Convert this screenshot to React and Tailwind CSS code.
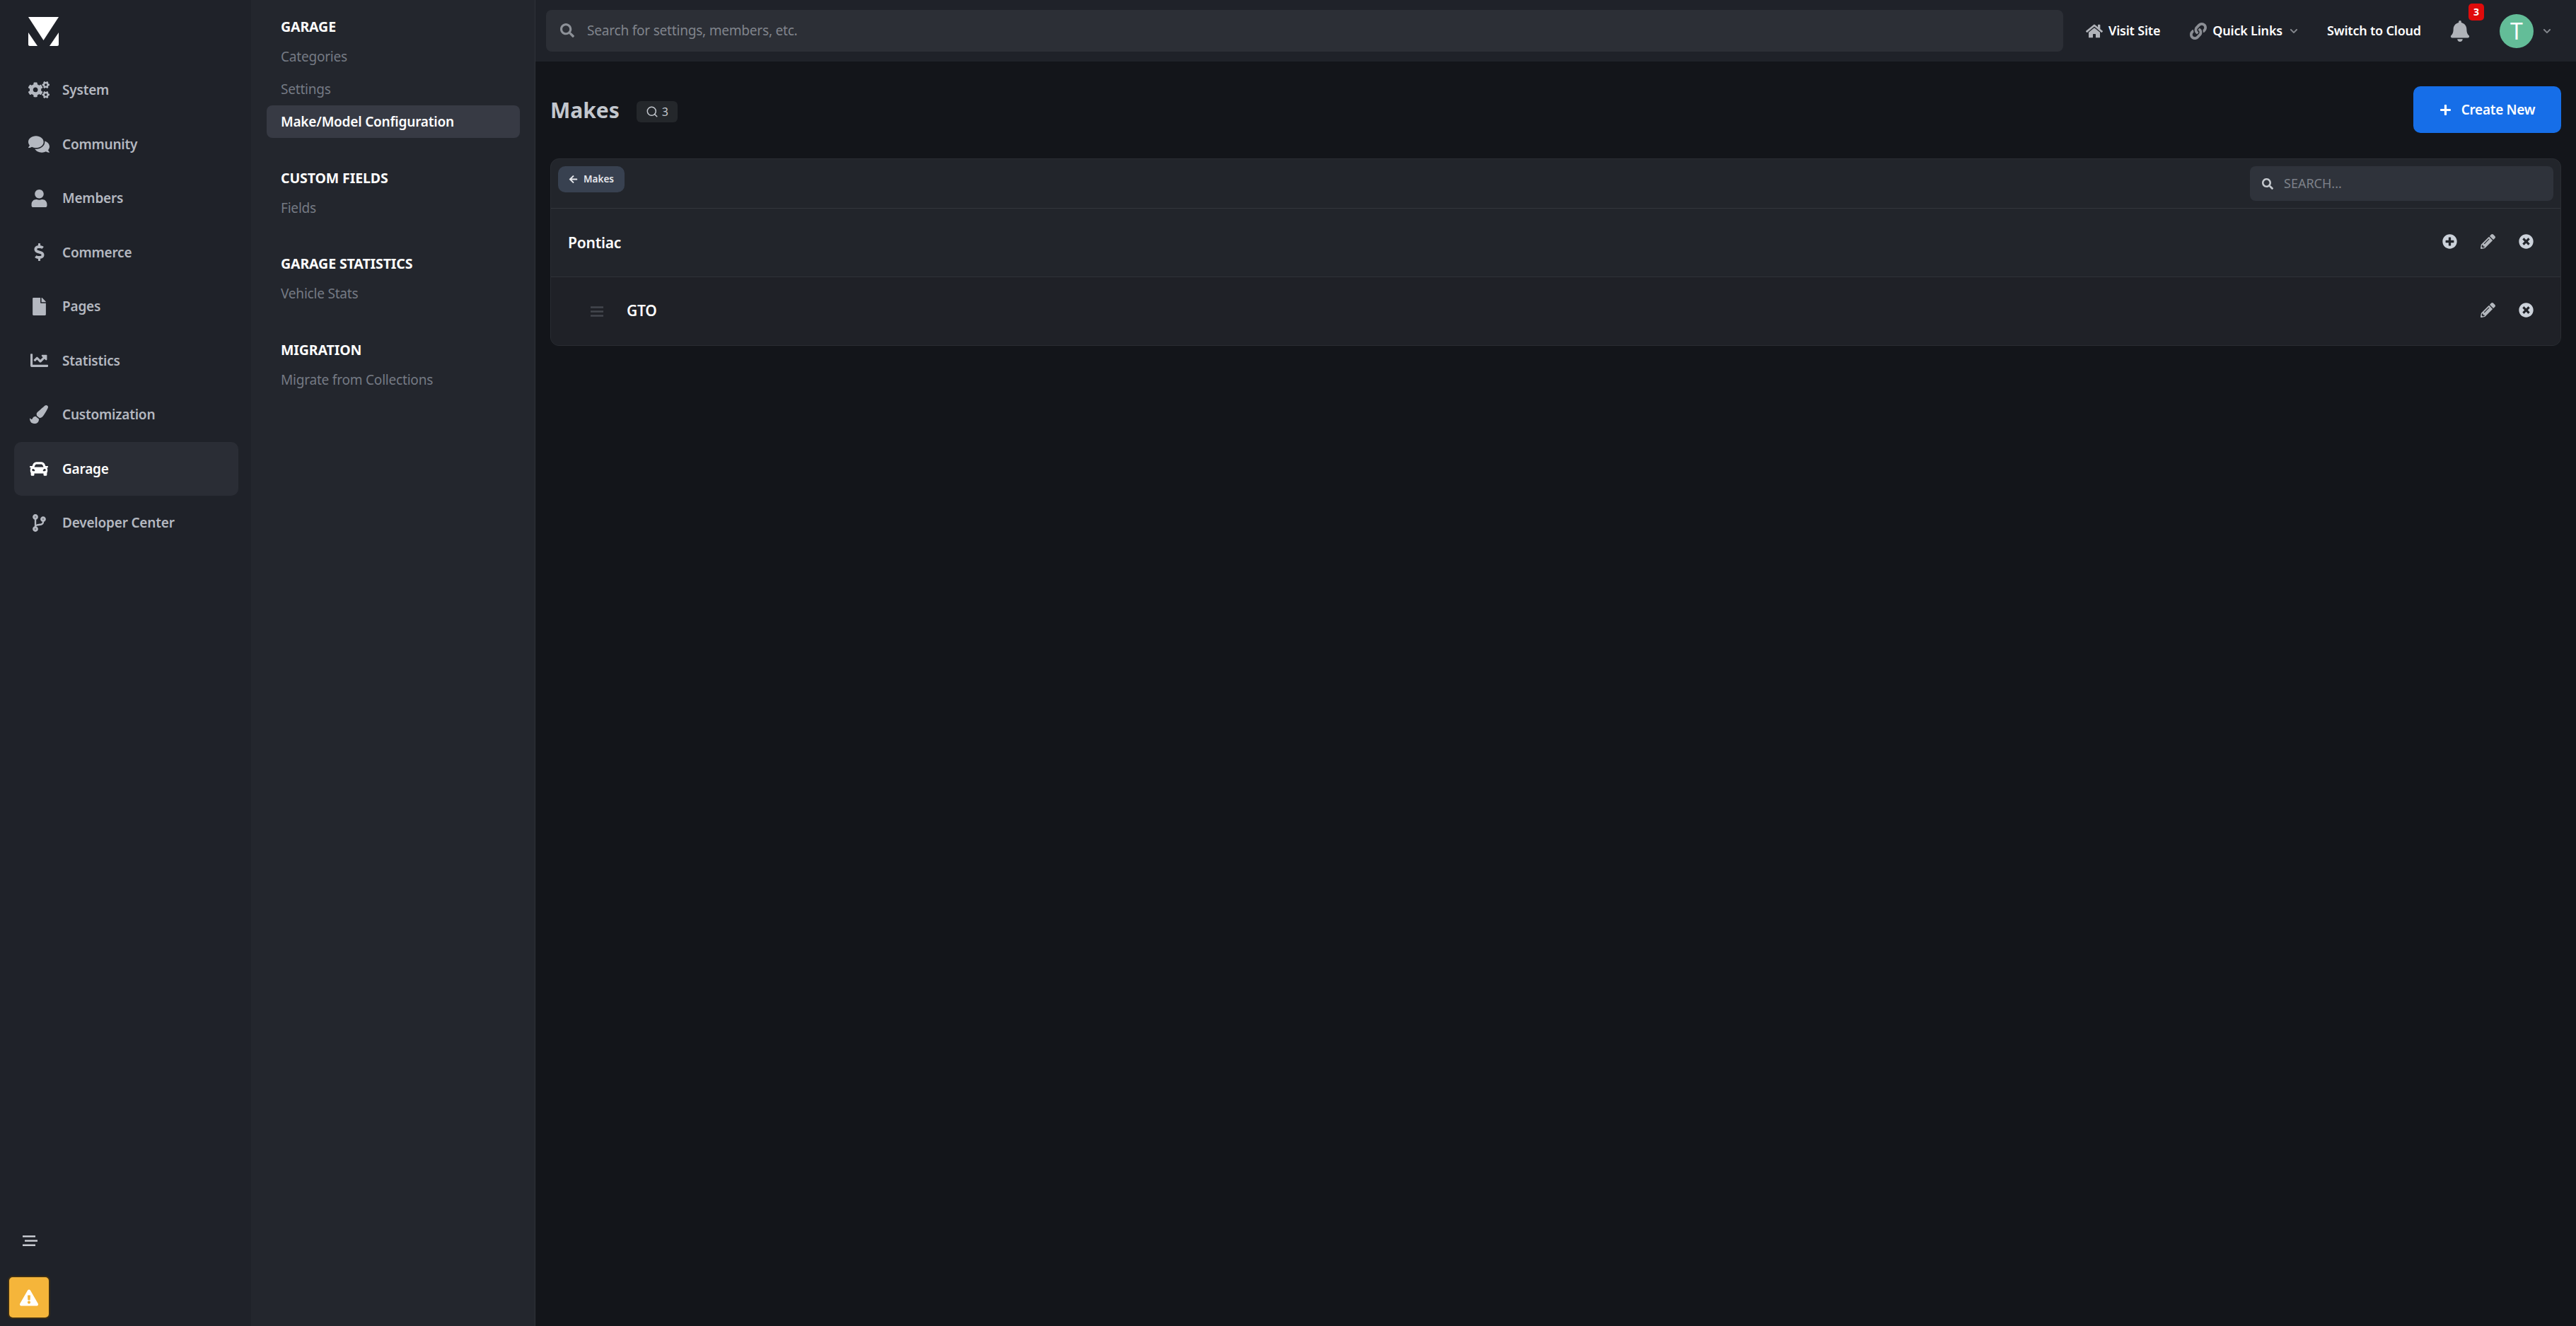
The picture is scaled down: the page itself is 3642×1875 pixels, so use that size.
import {
  FaCogs, FaComments, FaUser, FaDollarSign, FaFile, FaChartLine, FaPaintBrush, FaCar, FaCodeBranch,
  FaHome, FaLink, FaBell, FaPlus, FaSearch, FaPencilAlt, FaTimesCircle, FaPlusCircle, FaExclamationTriangle, FaArrowLeft, FaChevronDown,
} from 'react-icons/fa';
import { Search } from 'lucide-react';

const railItems = [
  { label: 'System', icon: FaCogs, size: 'text-[30px]' },
  { label: 'Community', icon: FaComments, size: 'text-[30px]' },
  { label: 'Members', icon: FaUser, size: 'text-[25px]' },
  { label: 'Commerce', icon: FaDollarSign, size: 'text-[25px]' },
  { label: 'Pages', icon: FaFile, size: 'text-[25px]' },
  { label: 'Statistics', icon: FaChartLine, size: 'text-[25px]' },
  { label: 'Customization', icon: FaPaintBrush, size: 'text-[26px]' },
  { label: 'Garage', icon: FaCar, active: true, size: 'text-[26px]' },
  { label: 'Developer Center', icon: FaCodeBranch, size: 'text-[25px]' },
];

const subSections = [
  { title: 'Garage', links: ['Categories', 'Settings', 'Make/Model Configuration'] },
  { title: 'Custom Fields', links: ['Fields'] },
  { title: 'Garage Statistics', links: ['Vehicle Stats'] },
  { title: 'Migration', links: ['Migrate from Collections'] },
];

const Logo = () => (
  <svg viewBox="0 0 43 41" className="w-[43px] h-[41px]">
    <path d="M0 0H43L21.5 33Z" fill="#fff" />
    <path d="M0 22L13 41H2Q0 41 0 39Z" fill="#fff" />
    <path d="M43 22L30 41H41Q43 41 43 39Z" fill="#fff" />
  </svg>
);

const Rail = () => (
  <aside className="w-[355px] shrink-0 bg-[#1f2229] flex flex-col">
    <div className="pl-[40px] pt-[24px] h-[89px]">
      <Logo />
    </div>
    <nav className="pl-[20px] pr-[18px]">
      {railItems.map(({ label, icon: Icon, active, size }) => (
        <a
          key={label}
          className={`flex items-center h-[76.5px] rounded-[10px] ${active ? 'bg-[#2a2d35] text-white' : 'text-[#b4b8c0]'}`}
        >
          <span className="w-[68px] flex justify-center pl-[2px]">
            <Icon className={size} />
          </span>
          <span className="text-[19px] tracking-[-0.2px] font-semibold">{label}</span>
        </a>
      ))}
    </nav>
    <div className="mt-auto pl-[11px] pb-[10px]">
      <svg viewBox="0 0 21 15" className="w-[21px] h-[15px] ml-[21px] mb-[42px]">
        <path d="M0 1.2H18M3 7.5H21M0 13.8H18" stroke="#c7cad0" strokeWidth="2.4" fill="none" />
      </svg>
      <button className="w-[60px] h-[61px] rounded-[7px] bg-[#f5b53a] border-2 border-[#3d2e14] flex items-center justify-center">
        <FaExclamationTriangle className="text-white text-[26px]" />
      </button>
    </div>
  </aside>
);

const SubNav = () => (
  <aside className="w-[402px] shrink-0 bg-[#23262d] border-r border-[#2f3238] pl-[22px] pr-[21px] pt-[26px]">
    {subSections.map((section) => (
      <section key={section.title} className="mb-[44.5px]">
        <h3 className="pl-[20px] text-[19.5px] tracking-[-0.1px] leading-[24px] font-bold uppercase text-white mb-[7px]">{section.title}</h3>
        {section.links.map((link) => {
          const active = link === 'Make/Model Configuration';
          return (
            <a
              key={link}
              className={`block pl-[20px] h-[46px] leading-[46px] text-[19px] tracking-[-0.2px] rounded-[8px] ${active ? 'bg-[#373a44] text-white font-semibold' : 'text-[#757a84]'}`}
            >
              {link}
            </a>
          );
        })}
      </section>
    ))}
  </aside>
);

const TopBar = () => (
  <header className="h-[87px] bg-[#1f2229] shrink-0 flex items-center pl-[15px] whitespace-nowrap">
    <div className="w-[2145px] shrink-0 h-[59px] -mt-[1px] rounded-[8px] bg-[#2c2f36] flex items-center pl-[20px] text-[#80848c] text-[19px] tracking-[-0.2px]">
      <FaSearch className="text-[#8d9198] text-[20px] mr-[18px]" />
      <span>Search for settings, members, etc.</span>
    </div>
    <a className="ml-[32px] flex items-center gap-[8px] text-[18px] tracking-[-0.2px] font-semibold text-white">
      <FaHome className="text-[#b0b3b9] text-[24px]" /> Visit Site
    </a>
    <a className="ml-[42px] flex items-center gap-[8px] text-[18px] tracking-[-0.2px] font-semibold text-white">
      <FaLink className="text-[#8b8e94] text-[24px]" /> Quick Links
      <FaChevronDown className="text-[#84878d] text-[12px] ml-[2px]" />
    </a>
    <a className="ml-[41px] text-[18px] tracking-[-0.2px] font-semibold text-white">Switch to Cloud</a>
    <div className="relative ml-[40px]">
      <FaBell className="text-[#b0b3b9] text-[30px]" />
      <span className="absolute -top-[24px] -right-[19px] w-[22px] h-[24px] rounded-[5px] bg-[#e00b0b] text-white text-[14px] font-bold flex items-center justify-center">3</span>
    </div>
    <div className="ml-[41px] w-[48px] h-[48px] rounded-full bg-[#63bd98] text-white text-[32px] flex items-center justify-center">T</div>
    <FaChevronDown className="text-[#84878d] text-[12px] ml-[13px]" />
  </header>
);

const ActionIcons = ({ add }) => (
  <div className="flex items-center gap-[33px] text-[#ccd2da] -mt-[3px]">
    {add && <FaPlusCircle className="text-[21px]" />}
    <FaPencilAlt className="text-[21px] text-[#b4b8be]" />
    <FaTimesCircle className="text-[21px]" />
  </div>
);

const Card = () => (
  <div className="rounded-[12px] bg-[#22252b] border border-[#2a2d33] overflow-hidden">
    <div className="h-[70px] flex items-start justify-between px-[10px] pt-[10px] border-b border-[#33363c]">
      <button className="h-[37px] w-[94px] rounded-[10px] bg-[#384150] text-[#e6e8ec] text-[13.5px] font-semibold flex items-center justify-center gap-[8px]">
        <FaArrowLeft className="text-[13px]" /> Makes
      </button>
      <div className="w-[429px] h-[49px] rounded-[8px] bg-[#2f333b] flex items-center pl-[17px] text-[18px] text-[#7d8189]">
        <FaSearch className="text-[#c5c9ce] text-[16px] mr-[15px]" />
        <span>SEARCH...</span>
      </div>
    </div>
    <div className="h-[97px] flex items-center justify-between pl-[24px] pr-[38px] border-b border-[#2f3238]">
      <span className="text-[21px] tracking-[-0.2px] font-semibold text-white mt-[2px]">Pontiac</span>
      <ActionIcons add />
    </div>
    <div className="h-[96px] flex items-center justify-between pl-[56px] pr-[38px] bg-[#1f2127]">
      <span className="flex items-center gap-[33px] text-[21px] tracking-[-0.2px] font-semibold text-white">
        <svg viewBox="0 0 18 15" className="w-[18px] h-[15px]">
          <path d="M0 1.5H18M0 7.5H18M0 13.5H18" stroke="#43464d" strokeWidth="2.6" fill="none" />
        </svg>
        GTO
      </span>
      <ActionIcons />
    </div>
  </div>
);

export default function App() {
  return (
    <div className="flex h-screen bg-[#13151a] overflow-hidden font-['Noto_Sans','Open_Sans',sans-serif]">
      <Rail />
      <SubNav />
      <div className="flex-1 flex flex-col min-w-0">
        <TopBar />
        <main className="pl-[21px] pr-[21px]">
          <div className="h-[137px] flex items-start justify-between pt-[35px]">
            <div className="flex items-center gap-[24px] h-[66px]">
              <h1 className="text-[30px] font-bold text-[#c3c7ce] mt-[1px]">Makes</h1>
              <span className="flex items-center gap-[5px] h-[30px] px-[13px] mt-[5px] rounded-[6px] bg-[#24272b] text-[#c3c7ce] text-[16px]">
                <Search size={18} strokeWidth={2} /> 3
              </span>
            </div>
            <button className="h-[66px] w-[209px] rounded-[10px] bg-[#166ee8] text-white text-[19px] tracking-[-0.3px] font-semibold flex items-center justify-center gap-[14px]">
              <FaPlus className="text-[17px]" /> Create New
            </button>
          </div>
          <Card />
        </main>
      </div>
    </div>
  );
}
